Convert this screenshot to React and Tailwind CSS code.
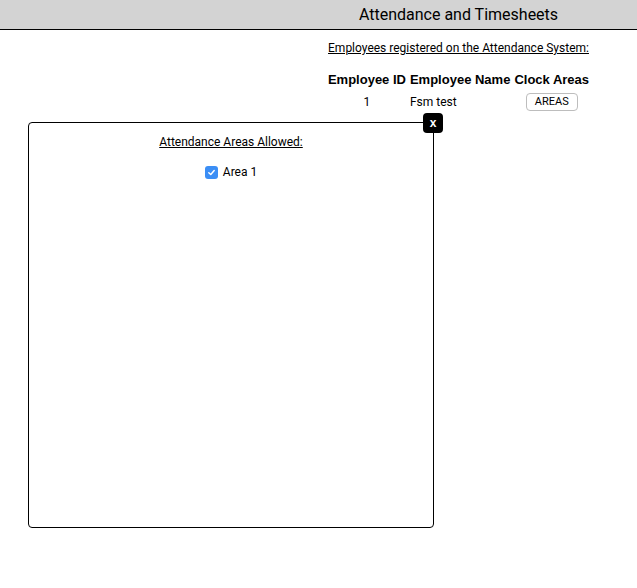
import React from "react";

const employees = [{ id: 1, name: "Fsm test" }];

function AreasModal() {
  return (
    <div className="absolute left-[28px] top-[122px] w-[406px] h-[406px] bg-white border border-black rounded-[4px]">
      <button className="absolute -top-[10px] -right-[10px] w-5 h-5 rounded-[4px] bg-black text-white text-[12px] font-bold leading-5 text-center font-['Liberation_Sans',sans-serif]">
        x
      </button>
      <div className="flex flex-col items-center pt-[12px]">
        <p className="text-[12px] leading-[14px] underline">Attendance Areas Allowed:</p>
        <label className="mt-[16px] flex items-center gap-[5px] text-[12px] leading-[14px]">
          <span className="w-[13px] h-[13px] rounded-[3px] bg-[#3b8ef5] flex items-center justify-center">
            <svg width="9" height="9" viewBox="0 0 10 10" fill="none">
              <path d="M2 5.2 L4.2 7.3 L8 2.8" stroke="white" strokeWidth="1.6" strokeLinecap="round" strokeLinejoin="round" />
            </svg>
          </span>
          Area 1
        </label>
      </div>
    </div>
  );
}

export default function App() {
  return (
    <div className="relative min-h-screen bg-white text-black font-['Roboto',sans-serif]">
      <div className="flex h-[30px] bg-[#d3d3d3] border-b border-black">
        <div className="w-[280px]" />
        <h1 className="flex-1 text-center text-[16px] leading-[29px] font-normal">
          Attendance and Timesheets
        </h1>
      </div>
      <div className="flex">
        <div className="w-[280px]" />
        <div className="flex-1 flex flex-col items-center">
          <p className="mt-[11px] text-[12px] leading-[14px] underline">
            Employees registered on the Attendance System:
          </p>
          <table className="mt-[13px] border-separate border-spacing-[2px]">
            <thead>
              <tr className="font-['Liberation_Sans',sans-serif] text-[13px] font-bold">
                <th className="px-[1px] pt-[2px] pb-[3px] leading-[15px]">Employee ID</th>
                <th className="px-[1px] pt-[2px] pb-[3px] leading-[15px]">Employee Name</th>
                <th className="px-[1px] pt-[2px] pb-[3px] leading-[15px]">Clock Areas</th>
              </tr>
            </thead>
            <tbody>
              {employees.map((emp) => (
                <tr key={emp.id} className="text-[12px]">
                  <td className="px-[1px] text-center">{emp.id}</td>
                  <td className="px-[1px] text-left">{emp.name}</td>
                  <td className="px-[1px] text-center">
                    <button className="h-[18px] px-[8px] text-[11px] leading-[16px] bg-white border border-[#bdbdbd] rounded-[4px]">
                      AREAS
                    </button>
                  </td>
                </tr>
              ))}
            </tbody>
          </table>
        </div>
      </div>
      <AreasModal />
    </div>
  );
}
